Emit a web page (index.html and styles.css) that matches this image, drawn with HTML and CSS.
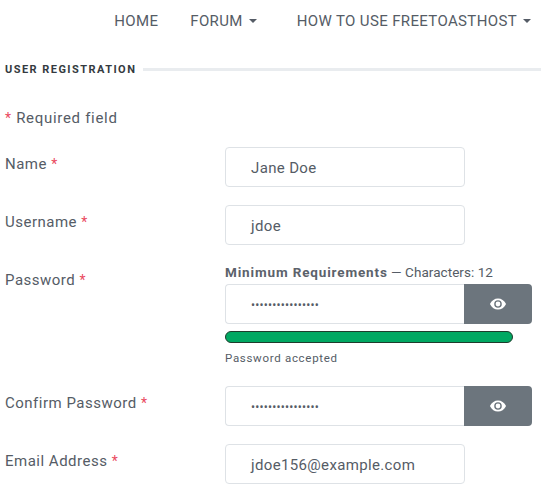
FILE: index.html
```html
<!DOCTYPE html>
<html lang="en">
	<head>
		<meta charset="UTF-8" />
		<title>User Registration</title>
		<link rel="stylesheet" href="styles.css">
	</head>
	<body>
		<nav class="nav">
			<a class="nav-link">HOME</a>
			<a class="nav-link caret forum">FORUM</a>
			<a class="nav-link caret">HOW TO USE FREETOASTHOST</a>
		</nav>
		<div class="section-title"><span>USER REGISTRATION</span></div>
		<p class="required-note"><span class="star">*</span> Required field</p>
		<form class="form">
			<div class="row">
				<label class="label">Name <span class="star">*</span></label>
				<div class="input">Jane Doe</div>
			</div>
			<div class="row">
				<label class="label">Username <span class="star">*</span></label>
				<div class="input">jdoe</div>
			</div>
			<div class="row">
				<label class="label">Password <span class="star">*</span></label>
				<div class="field">
					<div class="hint"><strong>Minimum Requirements</strong> — Characters: 12</div>
					<div class="input-group">
						<div class="input input-pw">••••••••••••••••</div>
						<div class="eye-btn">
							<svg width="16" height="12" viewBox="0 0 16 12"><path fill="#fff" fill-rule="evenodd" d="M8 .5C4.6.5 1.7 2.6.2 5.6a.9.9 0 0 0 0 .8C1.7 9.4 4.6 11.5 8 11.5s6.3-2.1 7.8-5.1a.9.9 0 0 0 0-.8C14.3 2.6 11.4.5 8 .5zm0 9.3A3.8 3.8 0 1 1 8 2.2a3.8 3.8 0 0 1 0 7.6zM8 3.6a2.4 2.4 0 1 0 0 4.8 2.4 2.4 0 0 0 0-4.8z"/></svg>
						</div>
					</div>
					<div class="strength"></div>
					<div class="accepted">Password accepted</div>
				</div>
			</div>
			<div class="row">
				<label class="label">Confirm Password <span class="star">*</span></label>
				<div class="input-group">
					<div class="input input-pw">••••••••••••••••</div>
					<div class="eye-btn">
						<svg width="16" height="12" viewBox="0 0 16 12"><path fill="#fff" fill-rule="evenodd" d="M8 .5C4.6.5 1.7 2.6.2 5.6a.9.9 0 0 0 0 .8C1.7 9.4 4.6 11.5 8 11.5s6.3-2.1 7.8-5.1a.9.9 0 0 0 0-.8C14.3 2.6 11.4.5 8 .5zm0 9.3A3.8 3.8 0 1 1 8 2.2a3.8 3.8 0 0 1 0 7.6zM8 3.6a2.4 2.4 0 1 0 0 4.8 2.4 2.4 0 0 0 0-4.8z"/></svg>
					</div>
				</div>
			</div>
			<div class="row">
				<label class="label">Email Address <span class="star">*</span></label>
				<div class="input">jdoe156@example.com</div>
			</div>
		</form>
	</body>
</html>
```

FILE: styles.css
```css
* {
	box-sizing: border-box;
	padding: 0;
	margin: 0;
}
html, body {
	height: 498px;
	overflow: hidden;
}
body {
	padding-left: 5px;
	background: #fff;
	color: #555c66;
	font-family: "Roboto", "Liberation Sans", sans-serif;
	font-size: 15px;
	letter-spacing: 0.5px;
}
.nav {
	display: flex;
	justify-content: flex-end;
	gap: 32px;
	height: 42px;
	padding-right: 10px;
	line-height: 43px;
	font-size: 15px;
	letter-spacing: 0.36px;
}
.nav-link {
	color: #555c66;
}
.forum {
	margin-right: 8px;
}
.caret::after {
	content: "";
	display: inline-block;
	margin-left: 6px;
	vertical-align: 3px;
	border-top: 4px solid #555c66;
	border-left: 4px solid transparent;
	border-right: 4px solid transparent;
}
.section-title {
	display: flex;
	align-items: center;
	gap: 7px;
	margin-top: 19px;
	height: 16px;
	font-size: 11px;
	font-weight: 700;
	letter-spacing: 1.45px;
	color: #343a40;
}
.section-title::after {
	content: "";
	flex: 1;
	height: 3px;
	background: #e9ecef;
}
.required-note {
	margin-top: 30px;
	line-height: 22px;
	letter-spacing: 0.7px;
}
.star {
	color: #ea4a60;
	font-size: 14px;
}
.form {
	margin-top: 18px;
}
.row {
	display: flex;
	align-items: flex-start;
	margin-bottom: 18px;
}
.label {
	flex: 0 0 220px;
	padding-top: 7px;
	line-height: 20px;
}
.input {
	width: 240px;
	height: 40px;
	padding-left: 25px;
	border: 1px solid #dee2e6;
	border-radius: 4px;
	line-height: 40px;
	background: #fff;
	color: #555c66;
	letter-spacing: 0.35px;
}
.field {
	width: 307px;
}
.hint {
	height: 21px;
	font-size: 13.5px;
	line-height: 19px;
	letter-spacing: 0.05px;
}
.hint strong {
	color: #5c626b;
	letter-spacing: 0.85px;
}
.input-group {
	display: flex;
	width: 307px;
}
.input-pw {
	flex: 1;
	width: auto;
	border-right: 0;
	border-radius: 4px 0 0 4px;
	font-size: 12px;
	letter-spacing: 0.2px;
	line-height: 41px;
}
.eye-btn {
	display: flex;
	align-items: center;
	justify-content: center;
	flex: 0 0 68px;
	height: 40px;
	background: #6c757d;
	border-radius: 0 4px 4px 0;
}
.strength {
	width: 288px;
	height: 12px;
	margin-top: 7px;
	background: #00a862;
	border: 1px solid #1f3b2c;
	border-radius: 6px;
}
.accepted {
	margin-top: 7px;
	margin-bottom: 2px;
	font-size: 11.5px;
	line-height: 16px;
	letter-spacing: 0.7px;
}
```
